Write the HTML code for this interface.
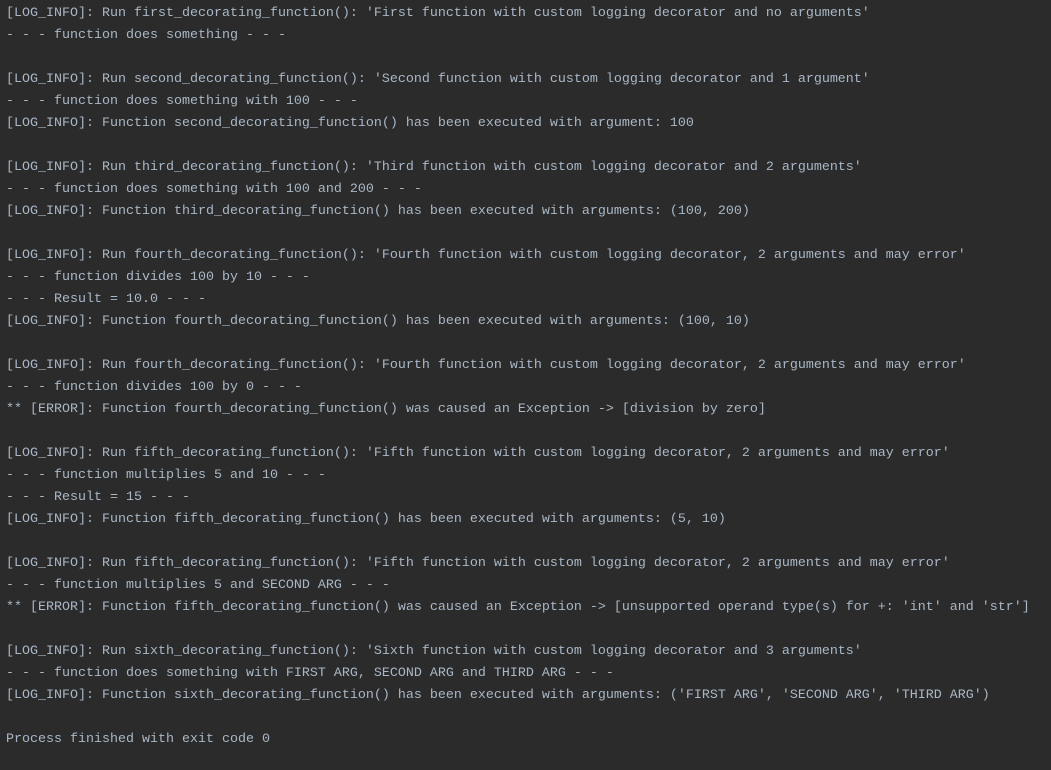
<!DOCTYPE html>
<html><head><meta charset="utf-8"><style>
html,body{margin:0;background:#2b2b2b;width:1051px;height:770px;overflow:hidden}
pre{margin:0;padding:3px 0 0 6px;font-family:"Liberation Mono",monospace;font-size:13.33px;line-height:22px;color:#a9b7c6;white-space:pre}
</style></head><body><pre>[LOG_INFO]: Run first_decorating_function(): 'First function with custom logging decorator and no arguments'
- - - function does something - - -

[LOG_INFO]: Run second_decorating_function(): 'Second function with custom logging decorator and 1 argument'
- - - function does something with 100 - - -
[LOG_INFO]: Function second_decorating_function() has been executed with argument: 100

[LOG_INFO]: Run third_decorating_function(): 'Third function with custom logging decorator and 2 arguments'
- - - function does something with 100 and 200 - - -
[LOG_INFO]: Function third_decorating_function() has been executed with arguments: (100, 200)

[LOG_INFO]: Run fourth_decorating_function(): 'Fourth function with custom logging decorator, 2 arguments and may error'
- - - function divides 100 by 10 - - -
- - - Result = 10.0 - - -
[LOG_INFO]: Function fourth_decorating_function() has been executed with arguments: (100, 10)

[LOG_INFO]: Run fourth_decorating_function(): 'Fourth function with custom logging decorator, 2 arguments and may error'
- - - function divides 100 by 0 - - -
** [ERROR]: Function fourth_decorating_function() was caused an Exception -&gt; [division by zero]

[LOG_INFO]: Run fifth_decorating_function(): 'Fifth function with custom logging decorator, 2 arguments and may error'
- - - function multiplies 5 and 10 - - -
- - - Result = 15 - - -
[LOG_INFO]: Function fifth_decorating_function() has been executed with arguments: (5, 10)

[LOG_INFO]: Run fifth_decorating_function(): 'Fifth function with custom logging decorator, 2 arguments and may error'
- - - function multiplies 5 and SECOND ARG - - -
** [ERROR]: Function fifth_decorating_function() was caused an Exception -&gt; [unsupported operand type(s) for +: 'int' and 'str']

[LOG_INFO]: Run sixth_decorating_function(): 'Sixth function with custom logging decorator and 3 arguments'
- - - function does something with FIRST ARG, SECOND ARG and THIRD ARG - - -
[LOG_INFO]: Function sixth_decorating_function() has been executed with arguments: ('FIRST ARG', 'SECOND ARG', 'THIRD ARG')

Process finished with exit code 0</pre></body></html>
